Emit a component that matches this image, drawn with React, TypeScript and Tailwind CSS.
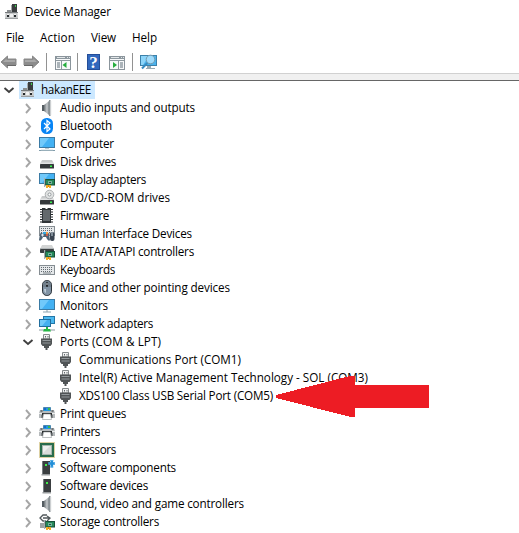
import { useLayoutEffect, useRef, type ReactNode } from "react";

const Svg = ({ children }: { children: ReactNode }) => (
  <svg viewBox="0 0 16 16" className="block h-4 w-4 shrink-0 overflow-visible">
    {children}
  </svg>
);

function Label({ text, width }: { text: string; width: number }) {
  const ref = useRef<HTMLSpanElement>(null);
  useLayoutEffect(() => {
    const el = ref.current;
    if (!el) return;
    el.style.letterSpacing = "0px";
    const natural = el.getBoundingClientRect().width;
    el.style.letterSpacing = `${(width - natural) / text.length}px`;
  }, [text, width]);
  return (
    <div className="flex h-[18px] leading-[16px]">
      <span ref={ref} className="shrink-0 whitespace-pre">
        {text}
      </span>
    </div>
  );
}

const Pc = () => (
  <Svg>
    <path d="M8 0h5v8H8z" fill="#3a3d3f" />
    <path d="M7 1h1v7H7z" fill="#a5a9ab" />
    <rect x="11" y="1" width="1" height="2" fill="#3bd04d" />
    <path d="M3 6h4v2H3z" fill="#8a8d8f" />
    <path d="M1.500 8h12l.5 7H1z" fill="#c6c8c9" />
    <path d="M1 8h13v1H1z" fill="#777b7d" />
    <path d="M1 14h13v1H1z" fill="#9b9fa1" />
    <path d="M3 11h2v2H3zM10 11h2v2h-2z" fill="#25292c" />
    <path d="M3 10h2v1H3zM10 10h2v1h-2zM6 10h3v3H6z" fill="#f0f1f1" />
  </Svg>
);

const Speaker = () => (
  <Svg>
    <defs>
      <linearGradient id="cone">
        <stop stopColor="#6b7276" />
        <stop offset=".6" stopColor="#c8cccf" />
        <stop offset="1" stopColor="#7d8589" />
      </linearGradient>
    </defs>
    <path d="M3 5h2v6H3z" fill="#555d62" />
    <path d="M5 5l5-4v14l-5-4z" fill="url(#cone)" />
    <path d="M10 0h1.500v16H10z" fill="#8a9296" />
    <path d="M11.500 1h.7v14h-.7z" fill="#d3d6d8" />
  </Svg>
);

const Bluetooth = () => (
  <Svg>
    <rect x="2" y="0" width="12" height="16" rx="5.5" fill="#0684f5" />
    <path d="M5 5l6 6-3 2.500v-11L11 5l-6 6" fill="none" stroke="#fff" strokeWidth="1.200" />
  </Svg>
);

const Screen = () => (
  <>
    <rect x=".5" y="1.500" width="15" height="10" fill="#43b1f3" stroke="#3b7ba5" />
    <path d="M1 2h9L3 11H1z" fill="#71c9fa" />
  </>
);
const Computer = () => (
  <Svg>
    <Screen />
    <path d="M6 12h4v1H6z" fill="#bac9d1" />
    <path d="M0 14h16v1H0z" fill="#819caa" />
    <path d="M2 13.500h12v.8H2z" fill="#d1dce1" />
  </Svg>
);
const Monitor = () => (
  <Svg>
    <Screen />
    <path d="M7 12h2v2H7z" fill="#c6d1d6" />
    <path d="M4 13.500h8v1H4z" fill="#8ea4b0" />
  </Svg>
);

const Drive = () => (
  <>
    <path d="M3 6h10l2 4H1z" fill="#c8cacb" />
    <path d="M2 8.500h12l1 1.500H1z" fill="#e2e3e4" />
    <rect x="1" y="10" width="14" height="4.500" rx=".6" fill="#34383b" />
    <path d="M11 11.500h2V13h-2z" fill="#38f54f" />
  </>
);
const Disk = () => (
  <Svg>
    <Drive />
  </Svg>
);

const Card = () => (
  <>
    <rect x="6.500" y="7.500" width="9" height="5.500" fill="#258859" stroke="#174f38" />
    <path d="M9 9h4v3H9z" fill="#74b39a" />
    <path d="M10 10h2v1h-2z" fill="#205640" />
    <path d="M7 13h2v3H7zM10 13h2v3h-2z" fill="#efad25" />
    <path d="M9 13h1v2H9z" fill="#e57d1c" />
    <path d="M5 6h1.200v9H5z" fill="#a7afb2" />
  </>
);
const Display = () => (
  <Svg>
    <Screen />
    <Card />
  </Svg>
);
const Dvd = () => (
  <Svg>
    <Drive />
    <circle cx="10.500" cy="4.500" r="4.300" fill="#e1e3e3" stroke="#9da1a3" strokeWidth=".8" />
    <circle cx="10.500" cy="4.500" r="1.500" fill="#fff" stroke="#93999c" />
  </Svg>
);

const Firmware = () => (
  <Svg>
    <path
      d="M1 1.500h13M1 4h13M1 6.500h13M1 9h13M1 11.500h13M1 14h13"
      stroke="#24292b"
      strokeWidth="1.200"
    />
    <path d="M3 0h3l1.500 1.500L9 0h3v15H3z" fill="#2f3437" />
    <path d="M4 2h7v11H4z" fill="#63696c" />
  </Svg>
);

const KeyboardShape = () => (
  <>
    <rect x=".5" y="3.500" width="15" height="9" fill="#e5e8ea" stroke="#858d92" />
    <path d="M2 5.500h12M2 7.500h12M2 9.500h12" stroke="#636b71" strokeDasharray="1 1" />
    <path d="M4 11h8" stroke="#7e868b" />
  </>
);
const Keyboard = () => (
  <Svg>
    <KeyboardShape />
  </Svg>
);
const Human = () => (
  <Svg>
    <g transform="translate(0 -3)">
      <KeyboardShape />
    </g>
    <path
      d="M0 14l1-6q1-2 3-1h3q2-1 3 1l1 6q-1 2-3-1l-1-2H4l-1 2q-2 3-3 1"
      fill="#4d6274"
    />
    <path d="M2 9h3M3.500 7.500v3" stroke="#dfe9f0" />
    <circle cx="8" cy="9" r="1" fill="#ef583f" />
    <path d="M7 6h2v2H7z" fill="#f29a42" />
    <path d="M4 6h3v2H4z" fill="#35a6df" />
    <rect x="11" y="6" width="4.500" height="9" rx="2" fill="#394451" />
    <path d="M13 6v4" stroke="#c9d7e1" />
  </Svg>
);

const Ide = () => (
  <Svg>
    <path d="M3 1h10l2 4H1z" fill="#d3d5d5" />
    <rect x="1" y="5" width="14" height="4" rx=".8" fill="#3b4042" />
    <path d="M1 4h14v1H1z" fill="#b2b7b9" />
    <Card />
  </Svg>
);

const Mouse = () => (
  <Svg>
    <rect x="3.500" y=".5" width="9" height="15" rx="4.300" fill="#8193a4" stroke="#2d343a" />
    <path d="M4 7V4q1-3 4-3t4 3v3z" fill="#717f8b" />
    <path d="M5 9h2v4q-2-1-2-4" fill="#bdcad5" />
    <rect x="7" y="2" width="2" height="5" rx="1" fill="#202529" />
    <path d="M8 3v2" stroke="#d8e3ed" />
  </Svg>
);

const Network = () => (
  <Svg>
    <rect x="4.500" y=".5" width="11" height="7" fill="#4bb8ef" stroke="#2377a8" />
    <rect x=".5" y="3.500" width="11" height="7" fill="#45b1ef" stroke="#216e9e" />
    <path d="M1 4h7l-5 6H1z" fill="#72caf8" />
    <path d="M0 13h16v2H0z" fill="#c5cccf" />
    <path d="M7 11h2v2h2l1 2.500H4L5 13h2z" fill="#25b745" />
  </Svg>
);

const Port = () => (
  <Svg>
    <path d="M4.500 .5h6V5h-6z" fill="#f1f2f2" stroke="#858a8c" />
    <path d="M6 2h1v1.500H6zM8.500 2h1v1.500h-1z" fill="#60676a" />
    <path d="M2 4.500h11V10l-1.500 2H10v2H8.500v2h-2v-2H5v-2H3.500L2 10z" fill="#505456" />
    <path d="M3.500 6.500h8M3.500 9h8" stroke="#92989b" />
  </Svg>
);

const Printer = () => (
  <Svg>
    <path d="M4.500 1.500h7v4h-7z" fill="#2199df" stroke="#4a88b0" />
    <path d="M5 2h2v2H5z" fill="#1769cb" />
    <path d="M9 2h2v2H9z" fill="#39bb49" />
    <path d="M1 4h3v1h8V4h3l1 3v5H0V7z" fill="#b6babc" />
    <path d="M1.500 4h2v2h-2zM12.500 4h2v2h-2z" fill="#70777a" />
    <path d="M0 7h16v1H0z" fill="#edefef" />
    <path d="M3 7h10v2H3z" fill="#272b2d" />
    <path d="M2.500 9h11v3h-11z" fill="#4b5053" />
    <path d="M4.500 8h7l1 5.500h-9z" fill="#fff" stroke="#8f9597" strokeWidth=".6" />
  </Svg>
);

const Processor = () => (
  <Svg>
    <rect
      x=".5"
      y=".5"
      width="15"
      height="15"
      fill="none"
      stroke="#baa247"
      strokeDasharray="1 1"
    />
    <rect x="1" y="1" width="14" height="14" fill="#286c4c" />
    <rect x="3.500" y="3.500" width="9" height="9" fill="#d8dcda" stroke="#a5b5ad" />
    <path d="M4 4h7l-7 7z" fill="#edf0ee" />
  </Svg>
);

const Tower = () => (
  <>
    <path d="M4 1h8v14H4z" fill="#3a3e40" />
    <path d="M4 1h1v14H4z" fill="#767c80" />
    <path d="M3.500 14h8.500v1.500H3.500z" fill="#979b9d" />
    <path d="M7 4h2v2H7z" fill="#41ed4a" />
  </>
);
const Software = () => (
  <Svg>
    <Tower />
  </Svg>
);
const Components = () => (
  <Svg>
    <g transform="translate(-1 0)">
      <Tower />
    </g>
    <path d="M9.500 3.500h6.500M12.800 0v7.500" stroke="#238fd8" strokeWidth="2.600" />
    <path d="M10 2v3M15.500 2v3M11 .500h3.500M11 7h3.500" stroke="#5fb2e8" strokeWidth=".8" />
  </Svg>
);
const Storage = () => (
  <Svg>
    <path
      d="M8 1H4L1 4l3 3h3M4 4h7M8 2l3 2-3 3"
      fill="none"
      stroke="#51585b"
      strokeWidth="1.300"
    />
    <path d="M1 9h6v5H1z" fill="#9ca2a4" />
    <Card />
  </Svg>
);

const Chevron = ({ open = false }: { open?: boolean }) => (
  <svg viewBox="0 0 12 12" className="block h-3 w-3 shrink-0">
    <path
      d={open ? "M1.500 4l4.500 4 4.500-4" : "M4 2l4 4.500-4 4.500"}
      fill="none"
      stroke={open ? "#404040" : "#a6a6a6"}
      strokeWidth="1.900"
    />
  </svg>
);

type Item = { text: string; width: number; icon: () => ReactNode; child?: boolean; open?: boolean };
const items: Item[] = [
  { text: "Audio inputs and outputs", width: 135, icon: Speaker },
  { text: "Bluetooth", width: 52, icon: Bluetooth },
  { text: "Computer", width: 54, icon: Computer },
  { text: "Disk drives", width: 56, icon: Disk },
  { text: "Display adapters", width: 86, icon: Display },
  { text: "DVD/CD-ROM drives", width: 110, icon: Dvd },
  { text: "Firmware", width: 49, icon: Firmware },
  { text: "Human Interface Devices", width: 132, icon: Human },
  { text: "IDE ATA/ATAPI controllers", width: 134, icon: Ide },
  { text: "Keyboards", width: 55, icon: Keyboard },
  { text: "Mice and other pointing devices", width: 170, icon: Mouse },
  { text: "Monitors", width: 48, icon: Monitor },
  { text: "Network adapters", width: 93, icon: Network },
  { text: "Ports (COM & LPT)", width: 101, icon: Port, open: true },
  { text: "Communications Port (COM1)", width: 162, icon: Port, child: true },
  {
    text: "Intel(R) Active Management Technology - SOL (COM3)",
    width: 289,
    icon: Port,
    child: true,
  },
  { text: "XDS100 Class USB Serial Port (COM5)", width: 194, icon: Port, child: true },
  { text: "Print queues", width: 66, icon: Printer },
  { text: "Printers", width: 40, icon: Printer },
  { text: "Processors", width: 56, icon: Processor },
  { text: "Software components", width: 116, icon: Components },
  { text: "Software devices", width: 88, icon: Software },
  { text: "Sound, video and game controllers", width: 184, icon: Speaker },
  { text: "Storage controllers", width: 99, icon: Storage },
];

const ToolArrow = ({ right = false }: { right?: boolean }) => (
  <svg viewBox="0 0 17 14" className="block h-3.5 w-[17px]">
    <path
      d={right ? "M16 7L9.500 1v3H1v6h8.500v3z" : "M1 7l6.500-6v3H16v6H7.500v3z"}
      fill="#8c8c8c"
      stroke="#8a8a8a"
    />
    <path
      d={right ? "M2 5h8.500V3.500L14 7H2z" : "M3 7l3.500-3.500V5H15v2z"}
      fill="#a9a9a9"
    />
    <path d={right ? "M1 10.500h9" : "M7 10.500h9"} stroke="#696969" />
  </svg>
);

const PanelIcon = ({ right = false }: { right?: boolean }) => (
  <svg viewBox="0 0 16 14" className="block h-3.5 w-4">
    <rect x=".5" y=".5" width="15" height="13" fill="#f8f9fa" stroke="#8b959c" />
    <path d="M1 1h14v2H1z" fill="#8d989f" />
    <path d="M2 1.500h8M12 1.500h1M14 1.500h1" stroke="#e3e7e9" />
    <path d={right ? "M1 4.500h14M9.500 5v8" : "M1 4.500h14M6.500 5v8"} stroke="#8e999f" />
    <path
      d={right ? "M11 7h3M11 9h3M11 11h3" : "M2 7h3M2 9h3M2 11h3"}
      stroke="#61717b"
    />
    <path d={right ? "M4 6l4 3-4 3z" : "M11.500 6l-4 3 4 3z"} fill="#25ad3d" />
  </svg>
);

const ScanIcon = () => (
  <svg viewBox="0 0 17 16" className="block h-4 w-[17px]">
    <rect x=".5" y="1.500" width="16" height="10" fill="#4bb3ed" stroke="#3c81aa" />
    <path d="M1 2h8l-6 9H1z" fill="#8cd5fa" />
    <path d="M7 12h4v2h4v1H6v-1h1z" fill="#99aab2" />
    <circle cx="10.500" cy="5.500" r="4.300" fill="#9edbfc" stroke="#7499ad" />
    <path d="M7.300 9L2 14.500" stroke="#368bc0" strokeWidth="2" />
  </svg>
);

const Divider = () => <div className="h-[18px] w-px bg-[#929292]" />;

export default function App() {
  return (
    <div className="relative h-[533px] w-[519px] overflow-hidden bg-white font-['Open_Sans','Noto_Sans',sans-serif] text-[11.700px] leading-[18px] text-black">
      <header className="flex h-[24px] items-center pl-1">
        <Pc />
        <div className="ml-[5px]">
          <Label text="Device Manager" width={86} />
        </div>
      </header>
      <nav className="flex h-[27px] items-center pl-1.5 pt-px">
        <div className="w-[34px]">
          <Label text="File" width={18} />
        </div>
        <div className="w-[51px]">
          <Label text="Action" width={35} />
        </div>
        <div className="w-[41px]">
          <Label text="View" width={25} />
        </div>
        <Label text="Help" width={25} />
      </nav>
      <div className="flex h-[22px] items-center">
        <div className="w-[23px]">
          <ToolArrow />
        </div>
        <div className="w-[23px]">
          <ToolArrow right />
        </div>
        <Divider />
        <div className="ml-2 w-[22px] pt-px">
          <PanelIcon />
        </div>
        <Divider />
        <div className="ml-[9px] flex h-4 w-[13px] items-center justify-center bg-[#3268bd] font-['Liberation_Serif',serif] text-[17px] font-bold leading-none text-white outline-1 -outline-offset-1 outline-[#244e99]">
          ?
        </div>
        <div className="ml-[9px] w-[23px] pt-px">
          <PanelIcon right />
        </div>
        <Divider />
        <div className="ml-[7px]">
          <ScanIcon />
        </div>
      </div>
      <div className="h-[8px] border-b border-[#666] bg-[#f0f0f0]">
        <div className="h-px bg-[#d1d1d1]" />
      </div>
      <main>
        <div className="flex h-[18px] items-center">
          <div className="w-[19px] pl-[3px]">
            <Chevron open />
          </div>
          <div className="flex h-[18px] w-[76px] items-center bg-[#cce8ff] pl-px">
            <Pc />
            <div className="ml-[5px]">
              <Label text="hakanEEE" width={50} />
            </div>
          </div>
        </div>
        {items.map(({ text, width, icon: Icon, child, open }) => (
          <div key={text} className="flex h-[18px] items-center pl-[22px]">
            {child ? <div className="w-9" /> : <Chevron open={open} />}
            <div className={child ? "" : "ml-[5px]"}>
              <Icon />
            </div>
            <div className="ml-[5px]">
              <Label text={text} width={width} />
            </div>
          </div>
        ))}
      </main>
      <svg
        viewBox="0 0 154 42"
        className="absolute left-[275px] top-[375px] h-[42px] w-[154px]"
        shapeRendering="crispEdges"
      >
        <path d="M1 20L75 1h5v9h74v23H80v9h-4L1 23z" fill="#ed1c24" />
      </svg>
    </div>
  );
}
